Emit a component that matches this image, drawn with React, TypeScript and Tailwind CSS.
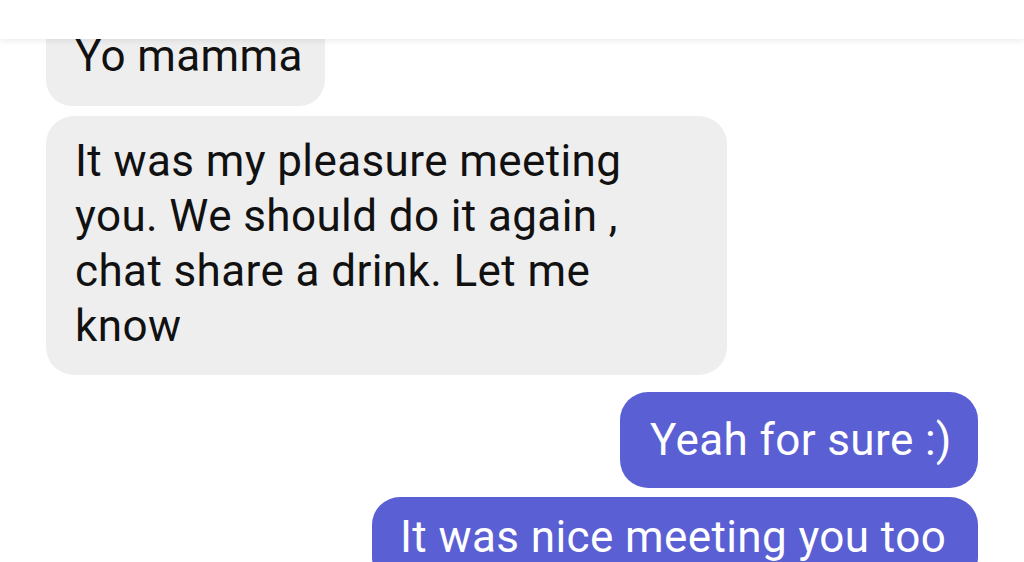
export default function App() {
  const font = { fontFamily: "Roboto, 'Noto Sans', sans-serif" };
  return (
    <div className="h-[562px] w-[1024px] overflow-hidden bg-white text-[44px] leading-[55px] tracking-[0.4px]" style={font}>
      {/* header */}
      <div className="relative z-10 h-[39px] bg-white shadow-[0_2px_6px_rgba(0,0,0,0.08)]" />

      {/* messages */}
      <div className="-mt-[31px] flex flex-col px-[46px]">
        <div className="w-[279px] rounded-[26px] bg-[#eeeeee] pl-[29px] pt-[21px] pb-[22px] text-[#111111]">
          Yo mamma
        </div>

        <div className="mt-[10px] w-[681px] rounded-[28px] bg-[#eeeeee] pl-[29px] pt-[18px] pb-[21px] text-[#111111]">
          <div>It was my pleasure meeting</div>
          <div>you. We should do it again ,</div>
          <div>chat share a drink. Let me</div>
          <div>know</div>
        </div>

        <div className="mt-[17px] self-end w-[358px] rounded-[28px] bg-[#5b5fd4] pl-[30px] pt-[21px] pb-[20px] text-white">
          Yeah for sure :)
        </div>

        <div className="mt-[9px] self-end w-[606px] rounded-[28px] bg-[#5b5fd4] pl-[28px] pt-[13px] pb-[20px] text-white">
          It was nice meeting you too
        </div>
      </div>
    </div>
  );
}
